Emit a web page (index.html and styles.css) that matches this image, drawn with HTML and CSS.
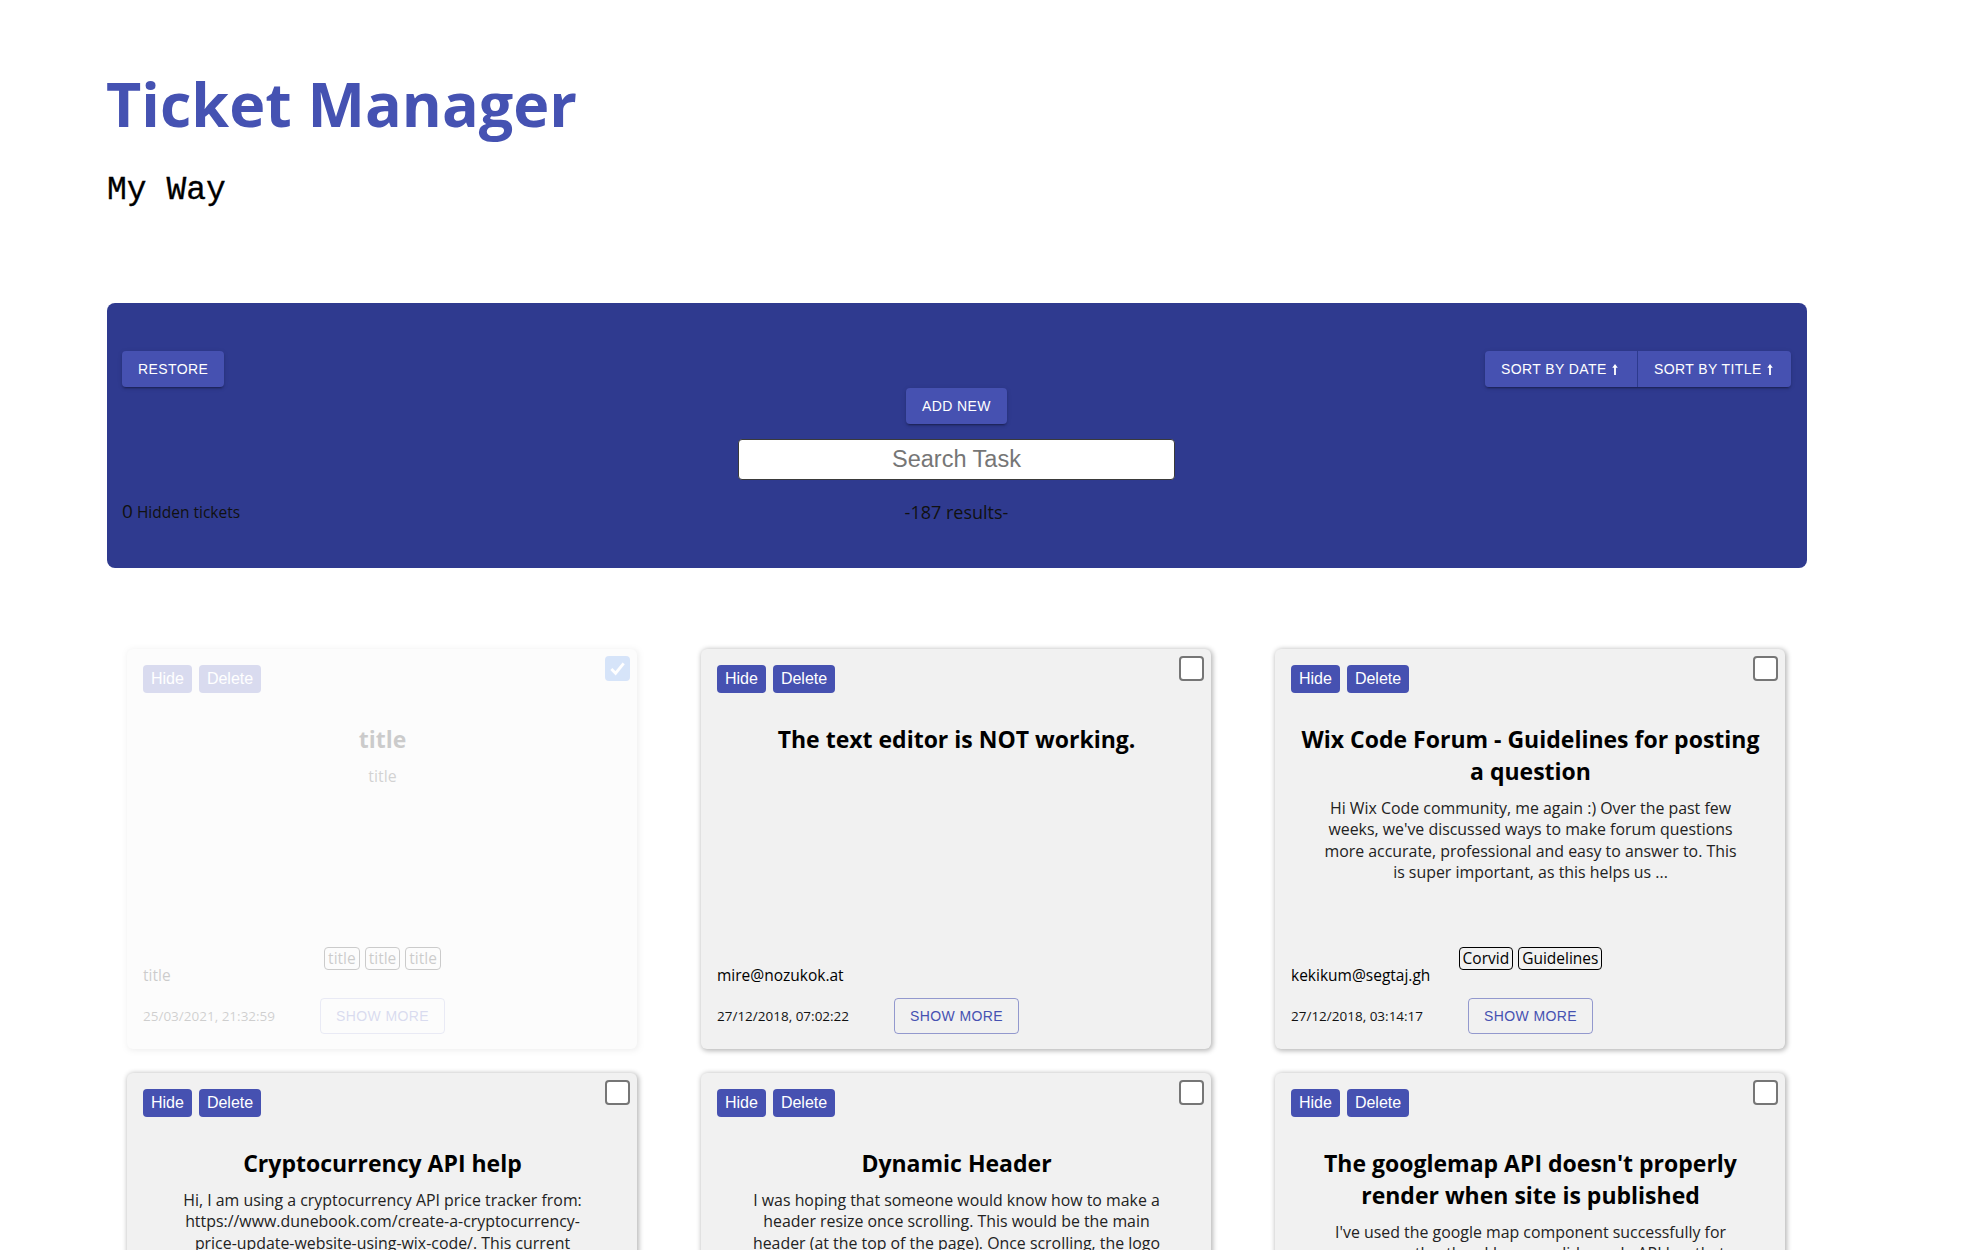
FILE: index.html
```html
<!DOCTYPE html>
<html lang="en">
<head>
<meta charset="utf-8">
<title>Ticket Manager</title>
<link rel="stylesheet" href="styles.css">
</head>
<body>
<div class="app">
  <header class="masthead">
    <h1 class="brand">Ticket Manager</h1>
    <h2 class="tagline">My Way</h2>
  </header>

  <section class="toolbar">
    <div class="toolbar-row">
      <button class="mui-btn">RESTORE</button>
      <div class="btn-group">
        <button class="mui-btn grouped">SORT BY DATE <svg class="arrow" viewBox="0 0 6 12" width="6" height="11"><path d="M3 0 L6 4.2 H4 V12 H2 V4.2 H0 Z"/></svg></button>
        <button class="mui-btn grouped">SORT BY TITLE <svg class="arrow" viewBox="0 0 6 12" width="6" height="11"><path d="M3 0 L6 4.2 H4 V12 H2 V4.2 H0 Z"/></svg></button>
      </div>
    </div>
    <div class="add-row"><button class="mui-btn">ADD NEW</button></div>
    <div class="search-row"><input class="search" type="text" placeholder="Search Task"></div>
    <div class="status-row">
      <div class="hidden-count"><span class="num">0</span> Hidden tickets</div>
      <div class="results">-187 results-</div>
      <div></div>
    </div>
  </section>

  <main class="tickets">
    <article class="ticket faded">
      <div class="ticket-actions"><button class="chip-btn">Hide</button><button class="chip-btn">Delete</button></div>
      <span class="check on"><svg viewBox="0 0 20 20" width="19" height="19"><path d="M3.5 10.5 L8 15 L16.5 4.5" fill="none" stroke="#fff" stroke-width="3"/></svg></span>
      <h3 class="ticket-title">title</h3>
      <p class="ticket-desc">title</p>
      <div class="ticket-foot">
        <div class="meta-row">
          <div class="email">title</div>
          <div class="tags"><span class="tag">title</span><span class="tag">title</span><span class="tag">title</span></div>
          <div></div>
        </div>
        <div class="action-row">
          <div class="date">25/03/2021, 21:32:59</div>
          <button class="show-more">SHOW MORE</button>
          <div></div>
        </div>
      </div>
    </article>

    <article class="ticket">
      <div class="ticket-actions"><button class="chip-btn">Hide</button><button class="chip-btn">Delete</button></div>
      <span class="check"></span>
      <h3 class="ticket-title">The text editor is NOT working.</h3>
      <div class="ticket-foot">
        <div class="meta-row">
          <div class="email">mire@nozukok.at</div>
          <div class="tags"></div>
          <div></div>
        </div>
        <div class="action-row">
          <div class="date">27/12/2018, 07:02:22</div>
          <button class="show-more">SHOW MORE</button>
          <div></div>
        </div>
      </div>
    </article>

    <article class="ticket">
      <div class="ticket-actions"><button class="chip-btn">Hide</button><button class="chip-btn">Delete</button></div>
      <span class="check"></span>
      <h3 class="ticket-title">Wix Code Forum - Guidelines for posting a question</h3>
      <p class="ticket-desc">Hi Wix Code community, me again :) Over the past few weeks, we've discussed ways to make forum questions more accurate, professional and easy to answer to. This is super important, as this helps us ...</p>
      <div class="ticket-foot">
        <div class="meta-row">
          <div class="email">kekikum@segtaj.gh</div>
          <div class="tags"><span class="tag">Corvid</span><span class="tag">Guidelines</span></div>
          <div></div>
        </div>
        <div class="action-row">
          <div class="date">27/12/2018, 03:14:17</div>
          <button class="show-more">SHOW MORE</button>
          <div></div>
        </div>
      </div>
    </article>

    <article class="ticket">
      <div class="ticket-actions"><button class="chip-btn">Hide</button><button class="chip-btn">Delete</button></div>
      <span class="check"></span>
      <h3 class="ticket-title">Cryptocurrency API help</h3>
      <p class="ticket-desc">Hi, I am using a cryptocurrency API price tracker from: https://www.dunebook.com/create-a-cryptocurrency-price-update-website-using-wix-code/. This current implementation stopped working ...</p>
      <div class="ticket-foot">
        <div class="meta-row">
          <div class="email">gakpo@vufuz.mk</div>
          <div class="tags"></div>
          <div></div>
        </div>
        <div class="action-row">
          <div class="date">26/12/2018, 22:41:09</div>
          <button class="show-more">SHOW MORE</button>
          <div></div>
        </div>
      </div>
    </article>

    <article class="ticket">
      <div class="ticket-actions"><button class="chip-btn">Hide</button><button class="chip-btn">Delete</button></div>
      <span class="check"></span>
      <h3 class="ticket-title">Dynamic Header</h3>
      <p class="ticket-desc">I was hoping that someone would know how to make a header resize once scrolling. This would be the main header (at the top of the page). Once scrolling, the logo would shrink ...</p>
      <div class="ticket-foot">
        <div class="meta-row">
          <div class="email">zuvwu@hevfe.io</div>
          <div class="tags"></div>
          <div></div>
        </div>
        <div class="action-row">
          <div class="date">26/12/2018, 19:05:51</div>
          <button class="show-more">SHOW MORE</button>
          <div></div>
        </div>
      </div>
    </article>

    <article class="ticket">
      <div class="ticket-actions"><button class="chip-btn">Hide</button><button class="chip-btn">Delete</button></div>
      <span class="check"></span>
      <h3 class="ticket-title">The googlemap API doesn't properly render when site is published</h3>
      <p class="ticket-desc">I've used the google map component successfully for some months, then I have a valid google API key that used to work ...</p>
      <div class="ticket-foot">
        <div class="meta-row">
          <div class="email">hiwdo@pakeb.tn</div>
          <div class="tags"></div>
          <div></div>
        </div>
        <div class="action-row">
          <div class="date">26/12/2018, 14:27:36</div>
          <button class="show-more">SHOW MORE</button>
          <div></div>
        </div>
      </div>
    </article>
  </main>
</div>
</body>
</html>
```

FILE: styles.css
```css
* { box-sizing: border-box; }
html { scrollbar-width: none; }
body {
  margin: 0;
  background: #fff;
  color: #000;
  font-family: "Open Sans", "Noto Sans", sans-serif;
}
.app {
  width: 1700px;
  margin-left: 107px;
  padding-bottom: 60px;
}

/* header */
.masthead {
  height: 303px;
  padding-top: 66px;
}
.brand {
  margin: 0 0 0 -1px;
  font-size: 61px;
  line-height: 76px;
  font-weight: 700;
  color: #4552b2;
}
.tagline {
  margin: 30px 0 0;
  font-family: "Liberation Mono", monospace;
  font-size: 33px;
  line-height: 37px;
  font-weight: 400;
  -webkit-text-stroke: 0.3px #000;
}

/* toolbar panel */
.toolbar {
  height: 265px;
  padding: 48px 16px 0 15px;
  background: #2f3a8f;
  border-radius: 8px;
}
.toolbar-row {
  display: flex;
  justify-content: space-between;
  align-items: flex-start;
  height: 37px;
}
.mui-btn {
  height: 36px;
  padding: 6px 16px;
  border: 0;
  border-radius: 4px;
  background: #4651b1;
  color: #fff;
  font-family: "Liberation Sans", Arial, sans-serif;
  font-size: 14px;
  line-height: 24px;
  letter-spacing: 0.4px;
  white-space: nowrap;
  box-shadow: 0 3px 1px -2px rgba(0,0,0,.2), 0 2px 2px 0 rgba(0,0,0,.14), 0 1px 5px 0 rgba(0,0,0,.12);
}
.btn-group {
  display: flex;
  border-radius: 4px;
  box-shadow: 0 3px 1px -2px rgba(0,0,0,.2), 0 2px 2px 0 rgba(0,0,0,.14), 0 1px 5px 0 rgba(0,0,0,.12);
}
.mui-btn.grouped {
  box-shadow: none;
  border-radius: 0;
}
.mui-btn.grouped:first-child {
  border-radius: 4px 0 0 4px;
  border-right: 1px solid #2d3a8e;
  padding-right: 19px;
}
.mui-btn.grouped:last-child {
  border-radius: 0 4px 4px 0;
  padding-right: 18px;
}
.arrow {
  fill: #fff;
  vertical-align: -1px;
  margin-left: 1px;
}
.add-row {
  display: flex;
  justify-content: center;
}
.search-row {
  display: flex;
  justify-content: center;
  margin-top: 15px;
}
.search {
  width: 437px;
  height: 41px;
  border: 1px solid #3a3a3a;
  border-radius: 4px;
  background: #fff;
  text-align: center;
  font-family: "Liberation Sans", Arial, sans-serif;
  font-size: 23.5px;
  color: #333;
}
.search::placeholder { color: #767676; }
.status-row {
  display: grid;
  grid-template-columns: 1fr auto 1fr;
  align-items: center;
  margin-top: 19px;
  color: #111;
}
.hidden-count {
  font-size: 15.5px;
  line-height: 24px;
}
.hidden-count .num { font-size: 19px; }
.results {
  font-size: 18px;
  line-height: 24px;
}

/* tickets */
.tickets {
  display: grid;
  grid-template-columns: repeat(3, 510px);
  column-gap: 64px;
  row-gap: 24px;
  padding: 81px 0 0 20px;
}
.ticket {
  position: relative;
  display: flex;
  flex-direction: column;
  height: 400px;
  padding: 16px 15px 15px 16px;
  background: #f1f1f1;
  border-radius: 6px;
  box-shadow: 1px 1px 5px 1px rgba(0,0,0,.28);
}
.ticket.faded { opacity: .2; }
.ticket-actions {
  display: flex;
  gap: 7px;
}
.chip-btn {
  height: 28px;
  padding: 5px 8px;
  border: 0;
  border-radius: 4px;
  background: #4651b1;
  color: #fff;
  font-family: "Liberation Sans", Arial, sans-serif;
  font-size: 16px;
  line-height: 18px;
}
.check {
  position: absolute;
  top: 7px;
  right: 7px;
  width: 25px;
  height: 25px;
  border: 2px solid #767676;
  border-radius: 4px;
  background: #fff;
}
.check.on {
  background: #3a7be6;
  border-color: #3a7be6;
}
.check svg { display: block; margin: 1px 0 0 1px; }
.ticket-title {
  max-width: 470px;
  margin: 30px auto 0;
  text-align: center;
  font-size: 23px;
  line-height: 32px;
  font-weight: 700;
}
.ticket-desc {
  max-width: 420px;
  margin: 11px auto 0;
  text-align: center;
  font-size: 15.9px;
  line-height: 21.3px;
  color: #222;
}
.ticket-foot { margin-top: auto; }
.meta-row {
  display: grid;
  grid-template-columns: 1fr auto 1fr;
  align-items: start;
}
.email {
  margin-top: 17.5px;
  font-size: 15.5px;
  line-height: 21px;
  white-space: nowrap;
}
.tags {
  display: flex;
  gap: 5px;
}
.tag {
  padding: 0 3px;
  border: 1px solid #000;
  border-radius: 4px;
  font-size: 15.5px;
  line-height: 21px;
}
.action-row {
  display: grid;
  grid-template-columns: 1fr auto 1fr;
  align-items: center;
  margin-top: 12.5px;
}
.date {
  font-size: 13.5px;
  color: #111;
}
.show-more {
  height: 36px;
  padding: 5px 15px;
  border: 1px solid rgba(70,81,177,.55);
  border-radius: 4px;
  background: transparent;
  color: #4651b1;
  font-family: "Liberation Sans", Arial, sans-serif;
  font-size: 14px;
  line-height: 24px;
  letter-spacing: 0.4px;
}
```
